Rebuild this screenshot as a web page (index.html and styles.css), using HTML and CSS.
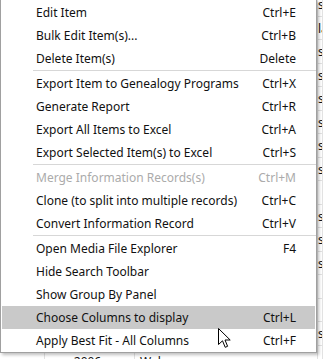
FILE: index.html
```html
<!DOCTYPE html>
<html lang="en">
<head>
    <meta charset="UTF-8">
    <meta name="viewport" content="width=device-width, initial-scale=1.0">
    <title>Context menu</title>
    <link rel="stylesheet" href="styles.css">
</head>
<body>
<!-- Таблица за меню -->
<div class="grid">
    <div class="row"><div class="c1"></div><div class="c2"></div><div class="c3"></div><div class="c4">sys</div></div>
    <div class="row"><div class="c1"></div><div class="c2"></div><div class="c3"></div><div class="c4">lab</div></div>
    <div class="row"><div class="c1"></div><div class="c2"></div><div class="c3"></div><div class="c4">sys</div></div>
    <div class="row"><div class="c1"></div><div class="c2"></div><div class="c3"></div><div class="c4">sys</div></div>
    <div class="row"><div class="c1"></div><div class="c2"></div><div class="c3"></div><div class="c4">sys</div></div>
    <div class="row"><div class="c1"></div><div class="c2"></div><div class="c3"></div><div class="c4">sys</div></div>
    <div class="row"><div class="c1"></div><div class="c2"></div><div class="c3"></div><div class="c4">sys</div></div>
    <div class="row"><div class="c1"></div><div class="c2"></div><div class="c3"></div><div class="c4">sys</div></div>
    <div class="row"><div class="c1"></div><div class="c2"></div><div class="c3"></div><div class="c4"></div></div>
    <div class="row"><div class="c1"></div><div class="c2"></div><div class="c3"></div><div class="c4">sys</div></div>
    <div class="row"><div class="c1"></div><div class="c2"></div><div class="c3"></div><div class="c4">sys</div></div>
    <div class="row"><div class="c1"></div><div class="c2"></div><div class="c3"></div><div class="c4">sys</div></div>
    <div class="row"><div class="c1"></div><div class="c2"></div><div class="c3"></div><div class="c4"></div></div>
    <div class="row"><div class="c1"></div><div class="c2"></div><div class="c3"></div><div class="c4"></div></div>
    <div class="row"><div class="c1"></div><div class="c2"></div><div class="c3"></div><div class="c4">sys</div></div>
    <div class="row"><div class="c1"></div><div class="c2 year">2006</div><div class="c3">Wal</div><div class="c4">sys</div></div>
</div>

<!-- Контекстное меню -->
<div class="menu">
    <div class="item"><span>Edit Item</span><span>Ctrl+E</span></div>
    <div class="item"><span>Bulk Edit Item(s)...</span><span>Ctrl+B</span></div>
    <div class="item"><span>Delete Item(s)</span><span>Delete</span></div>
    <div class="sep"></div>
    <div class="item"><span>Export Item to Genealogy Programs</span><span>Ctrl+X</span></div>
    <div class="item"><span>Generate Report</span><span>Ctrl+R</span></div>
    <div class="item"><span>Export All Items to Excel</span><span>Ctrl+A</span></div>
    <div class="item"><span>Export Selected Item(s) to Excel</span><span>Ctrl+S</span></div>
    <div class="sep"></div>
    <div class="item disabled"><span>Merge Information Records(s)</span><span>Ctrl+M</span></div>
    <div class="item"><span>Clone (to split into multiple records)</span><span>Ctrl+C</span></div>
    <div class="item"><span>Convert Information Record</span><span>Ctrl+V</span></div>
    <div class="sep"></div>
    <div class="item"><span>Open Media File Explorer</span><span>F4</span></div>
    <div class="item"><span>Hide Search Toolbar</span><span></span></div>
    <div class="item"><span>Show Group By Panel</span><span></span></div>
    <div class="item active"><span>Choose Columns to display</span><span>Ctrl+L</span></div>
    <div class="item"><span>Apply Best Fit - All Columns</span><span>Ctrl+F</span></div>
</div>

<svg class="cursor" width="14" height="21" viewBox="0 0 14 21">
    <polygon points="0.5,0.5 0.5,16.5 4.5,12.8 7.2,19.3 9.6,18.3 7,12 12.2,12" fill="#fff" stroke="#000" stroke-width="1" stroke-linejoin="miter"/>
</svg>
</body>
</html>
```

FILE: styles.css
```css
:root {
    --color-text: #111;
    --color-disabled: #ababab;
    --color-hover: #c9c9c9;
    --color-border: #a0a0a0;
    --color-sep: #d7d7d7;
    --color-grid: #e2e2e2;
}

body {
    margin: 0;
    width: 323px;
    height: 359px;
    overflow: hidden;
    position: relative;
    background: #fff;
    font-family: "Noto Sans", sans-serif;
    font-size: 12px;
    color: var(--color-text);
}

/* Таблица под меню */
.grid {
    margin-top: -7px;
}

.row {
    display: flex;
    height: 23.5px;
    box-sizing: border-box;
    border-bottom: 1px solid var(--color-grid);
}

.row > div {
    box-sizing: border-box;
    border-right: 1px solid var(--color-grid);
    overflow: hidden;
    white-space: nowrap;
    line-height: 23px;
}

.row:last-child > div {
    line-height: 32px;
}

.c1 { width: 45px; }
.c2 { width: 90px; }
.c3 { width: 183px; padding-left: 5px; }
.c4 { width: 5px; }

.year {
    text-align: center;
    padding-right: 4px;
}

/* Меню */
.menu {
    position: absolute;
    left: 0;
    top: 0;
    width: 317px;
    box-sizing: border-box;
    background: #fff;
    border: 1px solid var(--color-border);
    border-top: none;
    padding: 1px 1px 0;
    box-shadow: 2px 2px 3px rgba(0, 0, 0, 0.25);
}

.item {
    display: flex;
    justify-content: space-between;
    align-items: center;
    height: 23px;
    padding: 0 19px 0 34px;
    white-space: nowrap;
}

.item.active {
    background: var(--color-hover);
}

.item.disabled {
    color: var(--color-disabled);
}

.sep {
    height: 1px;
    margin: 0 -1px 1px 31px;
    background: var(--color-sep);
}

.cursor {
    position: absolute;
    left: 218px;
    top: 328px;
}
```
